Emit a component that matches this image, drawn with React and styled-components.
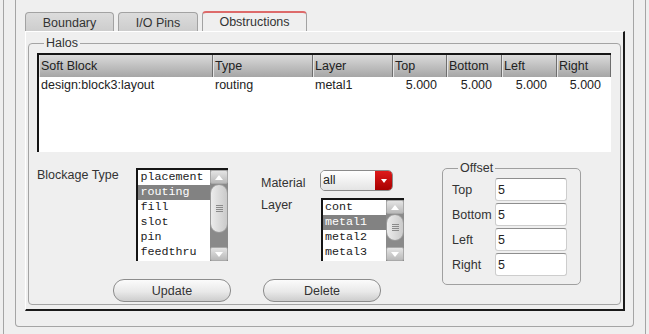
import React from "react";
import styled, { createGlobalStyle } from "styled-components";

const Global = createGlobalStyle`
  html, body { margin: 0; padding: 0; background: #efefef; }
  body {
    font-family: "Liberation Sans", Arial, sans-serif;
    font-size: 12.5px;
    color: #2b2b2b;
  }
  #root { width: 649px; height: 334px; overflow: hidden; }
  * { box-sizing: border-box; }
`;

const Shell = styled.div`
  display: flex;
  height: 334px;
  padding-left: 3px;
`;

const OuterFrame = styled.div`
  width: 643px;
  height: 100%;
  border-left: 1px solid #a5a5a5;
  border-right: 1px solid #a5a5a5;
  padding-left: 11px;
`;

const InnerFrame = styled.div`
  width: 619px;
  height: 327px;
  border: 1px solid #a5a5a5;
  border-top: none;
  border-radius: 0 0 4px 4px;
  padding: 11px 7px 0 9px;
  display: flex;
  flex-direction: column;
`;

const TabBar = styled.div`
  display: flex;
  align-items: flex-end;
  gap: 4px;
  height: 20px;
`;

const Tab = styled.div`
  width: ${(p) => p.$w}px;
  height: ${(p) => (p.$active ? 20 : 19)}px;
  display: flex;
  align-items: center;
  justify-content: center;
  border: 1px solid #a2a2a2;
  border-bottom: none;
  border-top: ${(p) => (p.$active ? "2px solid #dd6a6a" : "1px solid #a2a2a2")};
  border-radius: 4px 4px 0 0;
  background: ${(p) =>
    p.$active ? "#efefef" : "linear-gradient(#dcdcdc, #cdcdcd)"};
  color: #333;
  padding-top: ${(p) => (p.$active ? 0 : 1)}px;
`;

const Pane = styled.div`
  width: 600px;
  height: 280px;
  border-top: 1px solid #ffffff;
  border-left: 1px solid #ffffff;
  border-right: 2px solid #1a1a1a;
  border-bottom: 2px solid #1a1a1a;
  padding: 11px 2px 0 2px;
`;

const Group = styled.div`
  position: relative;
  width: 100%;
  height: ${(p) => p.$h}px;
  border: 1px solid #a4a4a4;
  border-radius: 4px;
`;

const Legend = styled.span`
  position: absolute;
  top: -8px;
  left: 15px;
  padding: 0 2px;
  line-height: 14px;
  background: #efefef;
  color: #333;
`;

const Table = styled.div`
  margin: 9px 9px 0 8px;
  width: 574px;
  height: 99px;
  background: #ffffff;
  border-top: 2px solid #141414;
  border-left: 2px solid #141414;
`;

const cols = "174px 100px 80px 54px 55px 55px 54px";

const HeaderRow = styled.div`
  display: grid;
  grid-template-columns: ${cols};
  height: 22px;
  background: linear-gradient(#dadada, #a6a6a6);
`;

const HeaderCell = styled.div`
  padding-left: 2px;
  line-height: 22px;
  border-right: 1px solid #6e6e6e;
  box-shadow: inset 1px 0 0 #e4e4e4;
  color: #222;
  white-space: nowrap;
  overflow: hidden;
`;

const DataRow = styled.div`
  display: grid;
  grid-template-columns: ${cols};
  height: 16px;
`;

const DataCell = styled.div`
  line-height: 16px;
  padding-left: ${(p) => (p.$num ? 0 : 2)}px;
  padding-right: ${(p) => (p.$num ? 10 : 0)}px;
  text-align: ${(p) => (p.$num ? "right" : "left")};
  color: #222;
  white-space: nowrap;
`;

const BottomArea = styled.div`
  display: flex;
  margin-top: 16px;
  padding-left: 8px;
`;

const LeftCol = styled.div`
  width: 367px;
  display: flex;
  flex-direction: column;
`;

const TopRow = styled.div`
  display: flex;
  align-items: flex-start;
`;

const FieldLabel = styled.div`
  width: ${(p) => p.$w || "auto"};
  line-height: 14px;
  padding-top: ${(p) => p.$pt || 0}px;
  color: #333;
  white-space: nowrap;
`;

const MatLayer = styled.div`
  margin-left: 33px;
  margin-top: 2px;
  display: grid;
  grid-template-columns: 59px auto;
  row-gap: 7px;
  align-items: start;
`;

const ListFrame = styled.div`
  display: flex;
  width: ${(p) => p.$w}px;
  height: ${(p) => p.$h}px;
  margin-left: ${(p) => p.$ml || 0}px;
  background: #ffffff;
  border-top: 2px solid #151515;
  border-left: 2px solid #151515;
`;

const ListItems = styled.div`
  flex: 1;
  overflow: hidden;
  font-family: "Liberation Mono", "Courier New", monospace;
  font-size: 11.7px;
`;

const ListItem = styled.div`
  height: 15px;
  line-height: 15px;
  padding-left: 2px;
  white-space: nowrap;
  background: ${(p) => (p.$sel ? "#828282" : "transparent")};
  color: ${(p) => (p.$sel ? "#ffffff" : "#1a1a1a")};
`;

const ScrollBar = styled.div`
  width: 18px;
  display: flex;
  flex-direction: column;
  background: #8a8a8a;
`;

const ScrollBtn = styled.div`
  height: 14px;
  flex: none;
  display: flex;
  align-items: center;
  justify-content: center;
  background: linear-gradient(#e4e4e4, #b9b9b9);
  border: 1px solid #a9a9a9;
  border-radius: 2px;
`;

const Track = styled.div`
  flex: 1;
  display: flex;
  flex-direction: column;
`;

const Thumb = styled.div`
  height: ${(p) => p.$h}px;
  display: flex;
  align-items: center;
  justify-content: center;
  border: 1px solid #9a9a9a;
  border-radius: 9px;
  background: linear-gradient(to right, #ececec, #cacaca);
`;

const Grip = styled.div`
  width: 7px;
  height: 7px;
  background: repeating-linear-gradient(#8a8a8a 0 1px, transparent 1px 2px);
`;

const Arrow = ({ dir }) => (
  <svg width="8" height="5" viewBox="0 0 8 5">
    <polygon
      points={dir === "up" ? "0,5 8,5 4,0" : "0,0 8,0 4,5"}
      fill="#ffffff"
    />
  </svg>
);

const ListBox = ({ items, selected, w, h, thumb, ml }) => (
  <ListFrame $w={w} $h={h} $ml={ml}>
    <ListItems>
      {items.map((it) => (
        <ListItem key={it} $sel={it === selected}>
          {it}
        </ListItem>
      ))}
    </ListItems>
    <ScrollBar>
      <ScrollBtn>
        <Arrow dir="up" />
      </ScrollBtn>
      <Track>
        <Thumb $h={thumb}>
          <Grip />
        </Thumb>
      </Track>
      <ScrollBtn>
        <Arrow dir="down" />
      </ScrollBtn>
    </ScrollBar>
  </ListFrame>
);

const Dropdown = styled.div`
  display: flex;
  width: 73px;
  height: 21px;
  border: 1px solid #8a8a8a;
  border-radius: 5px;
  overflow: hidden;
`;

const DropText = styled.div`
  flex: 1;
  padding-left: 2px;
  line-height: 19px;
  background: linear-gradient(#ffffff, #e4e4e4);
  color: #222;
`;

const DropArrow = styled.div`
  width: 17px;
  display: flex;
  align-items: center;
  justify-content: center;
  background: linear-gradient(#de1a1a, #a80000);
`;

const ButtonRow = styled.div`
  display: flex;
  gap: 32px;
  margin-top: 18px;
  padding-left: 76px;
`;

const Button = styled.div`
  width: 118px;
  height: 23px;
  display: flex;
  align-items: center;
  justify-content: center;
  border: 1px solid #8c8c8c;
  border-radius: 11px;
  background: linear-gradient(#fbfbfb, #e9e9e9 55%, #cdcdcd);
  color: #333;
`;

const OffsetBox = styled.div`
  position: relative;
  margin-left: 38px;
  width: 139px;
  height: 117px;
  border: 1px solid #a0a0a0;
  border-radius: 5px;
  padding: 9px 0 0 9px;
  display: grid;
  grid-template-columns: 43px 72px;
  grid-auto-rows: 23px;
  row-gap: 2px;
  align-content: start;
  align-items: center;
`;

const Input = styled.input`
  width: 72px;
  height: 23px;
  margin: 0;
  padding: 0 0 0 2px;
  border: 1px solid #cdcdcd;
  border-top-color: #8e8e8e;
  border-radius: 3px;
  background: #ffffff;
  font-family: "Liberation Sans", Arial, sans-serif;
  font-size: 12.5px;
  color: #222;
  outline: none;
`;

const headers = ["Soft Block", "Type", "Layer", "Top", "Bottom", "Left", "Right"];
const row = [
  ["design:block3:layout", false],
  ["routing", false],
  ["metal1", false],
  ["5.000", true],
  ["5.000", true],
  ["5.000", true],
  ["5.000", true],
];

export default function App() {
  return (
    <>
      <Global />
      <Shell>
        <OuterFrame>
          <InnerFrame>
            <TabBar>
              <Tab $w={89}>Boundary</Tab>
              <Tab $w={80}>I/O Pins</Tab>
              <Tab $w={105} $active>
                Obstructions
              </Tab>
            </TabBar>
            <Pane>
              <Group $h={262}>
                <Legend>Halos</Legend>
                <Table>
                  <HeaderRow>
                    {headers.map((h) => (
                      <HeaderCell key={h}>{h}</HeaderCell>
                    ))}
                  </HeaderRow>
                  <DataRow>
                    {row.map(([t, num], i) => (
                      <DataCell key={i} $num={num}>
                        {t}
                      </DataCell>
                    ))}
                  </DataRow>
                </Table>
                <BottomArea>
                  <LeftCol>
                    <TopRow>
                      <FieldLabel $w="100px">Blockage Type</FieldLabel>
                      <ListBox
                        w={92}
                        h={93}
                        thumb={49}
                        items={["placement", "routing", "fill", "slot", "pin", "feedthru"]}
                        selected="routing"
                      />
                      <MatLayer>
                        <FieldLabel $pt={6}>Material</FieldLabel>
                        <Dropdown>
                          <DropText>all</DropText>
                          <DropArrow>
                            <svg width="6" height="4" viewBox="0 0 6 4">
                              <polygon points="0,0 6,0 3,4" fill="#ffffff" />
                            </svg>
                          </DropArrow>
                        </Dropdown>
                        <FieldLabel>Layer</FieldLabel>
                        <ListBox
                          w={83}
                          h={63}
                          ml={1}
                          thumb={27}
                          items={["cont", "metal1", "metal2", "metal3"]}
                          selected="metal1"
                        />
                      </MatLayer>
                    </TopRow>
                    <ButtonRow>
                      <Button>Update</Button>
                      <Button>Delete</Button>
                    </ButtonRow>
                  </LeftCol>
                  <OffsetBox>
                    <Legend>Offset</Legend>
                    {["Top", "Bottom", "Left", "Right"].map((l) => (
                      <React.Fragment key={l}>
                        <FieldLabel>{l}</FieldLabel>
                        <Input defaultValue="5" readOnly />
                      </React.Fragment>
                    ))}
                  </OffsetBox>
                </BottomArea>
              </Group>
            </Pane>
          </InnerFrame>
        </OuterFrame>
      </Shell>
    </>
  );
}
